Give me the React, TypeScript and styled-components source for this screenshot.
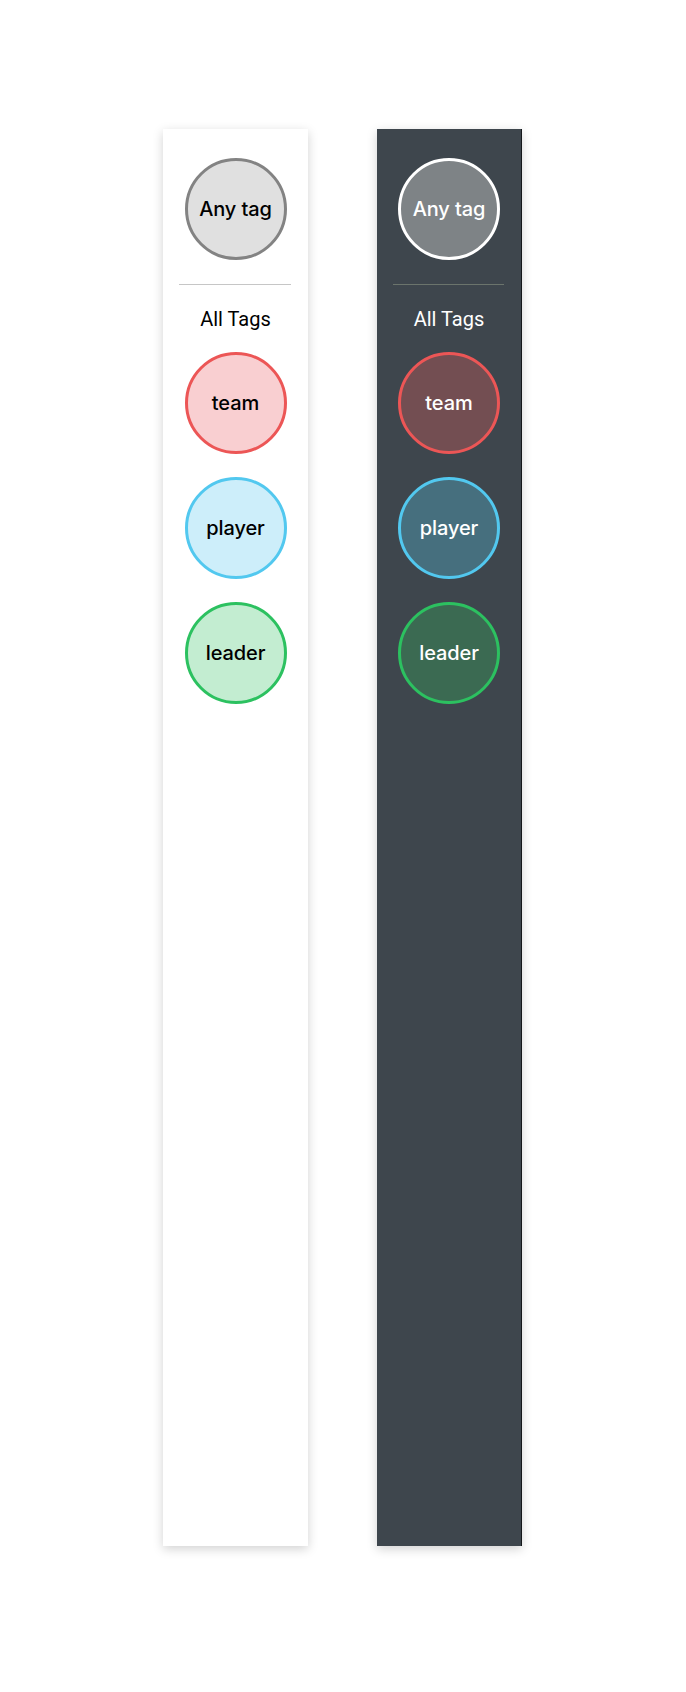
import React from "react";
import styled, { createGlobalStyle } from "styled-components";

const GlobalStyle = createGlobalStyle`
  body {
    margin: 0;
    background: #ffffff;
  }
`;

type Tag = {
  name: string;
  border: string;
  light: string;
  dark: string;
};

const tags: Tag[] = [
  { name: "team", border: "#ec5656", light: "#f9cfd1", dark: "#734e52" },
  { name: "player", border: "#52c8ef", light: "#cdeefa", dark: "#466f7e" },
  { name: "leader", border: "#2cc160", light: "#c3edd1", dark: "#3b6a52" },
];

const Page = styled.div`
  display: flex;
  gap: 69px;
  padding: 129px 0 0 163px;
  height: 1692px;
  box-sizing: border-box;
`;

const Panel = styled.aside<{ $dark?: boolean }>`
  width: 145px;
  height: 1417px;
  box-sizing: border-box;
  display: flex;
  flex-direction: column;
  align-items: center;
  padding-top: 29px;
  background: ${(p) => (p.$dark ? "#3e464d" : "#ffffff")};
  color: ${(p) => (p.$dark ? "#ffffff" : "#000000")};
  border-right: ${(p) => (p.$dark ? "1px solid #15181b" : "none")};
  box-shadow: 0 3px 10px rgba(0, 0, 0, 0.18);
`;

const Bubble = styled.div<{ $border: string; $fill: string }>`
  width: 102px;
  height: 102px;
  flex-shrink: 0;
  box-sizing: border-box;
  border-radius: 50%;
  border: 3px solid ${(p) => p.$border};
  background: ${(p) => p.$fill};
  display: flex;
  align-items: center;
  justify-content: center;
  font-family: Inter, "Noto Sans", sans-serif;
  font-weight: 500;
  font-size: 20px;
  letter-spacing: -0.1px;
`;

const Divider = styled.hr<{ $dark?: boolean }>`
  align-self: stretch;
  margin: 24px 17px 0 16px;
  border: 0;
  height: 1px;
  background: ${(p) => (p.$dark ? "#6b746c" : "#c6c6c6")};
`;

const Label = styled.div`
  margin-top: 22px;
  margin-bottom: 21px;
  font-family: Roboto, "Liberation Sans", sans-serif;
  font-size: 20px;
  line-height: 24px;
`;

const TagList = styled.div`
  display: flex;
  flex-direction: column;
  gap: 23px;
`;

const TagPanel = ({ dark }: { dark?: boolean }) => (
  <Panel $dark={dark}>
    <Bubble
      $border={dark ? "#ffffff" : "#838383"}
      $fill={dark ? "#7e8386" : "#e0e0e0"}
    >
      Any tag
    </Bubble>
    <Divider $dark={dark} />
    <Label>All Tags</Label>
    <TagList>
      {tags.map((t) => (
        <Bubble key={t.name} $border={t.border} $fill={dark ? t.dark : t.light}>
          {t.name}
        </Bubble>
      ))}
    </TagList>
  </Panel>
);

export default function App() {
  return (
    <>
      <GlobalStyle />
      <Page>
        <TagPanel />
        <TagPanel dark />
      </Page>
    </>
  );
}
